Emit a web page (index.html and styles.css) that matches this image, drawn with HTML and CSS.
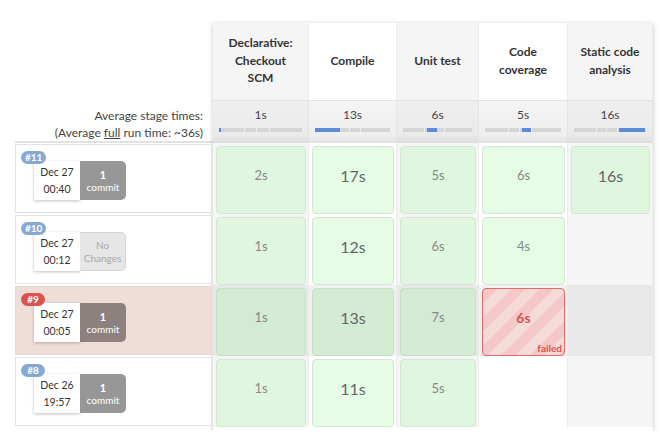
FILE: index.html
```html
<!DOCTYPE html>
<html>
<head>
<meta charset="utf-8">
<link rel="stylesheet" href="styles.css">
</head>
<body>
<div class="wrap">
  <div class="left">
    <div class="spacer"></div>
    <div class="avg-label">
      <div>Average stage times:</div>
      <div>(Average <u>full</u> run time: ~36s)</div>
    </div>
    <div class="run">
      <div class="run-box">
        <span class="badge">#11</span>
        <div class="date"><span>Dec 27</span><span>00:40</span></div>
        <div class="commit"><b>1</b><span>commit</span></div>
      </div>
    </div>
    <div class="run">
      <div class="run-box">
        <span class="badge">#10</span>
        <div class="date"><span>Dec 27</span><span>00:12</span></div>
        <div class="commit none"><span>No</span><span>Changes</span></div>
      </div>
    </div>
    <div class="run">
      <div class="run-box failed">
        <span class="badge red">#9</span>
        <div class="date"><span>Dec 27</span><span>00:05</span></div>
        <div class="commit dark"><b>1</b><span>commit</span></div>
      </div>
    </div>
    <div class="run">
      <div class="run-box">
        <span class="badge">#8</span>
        <div class="date"><span>Dec 26</span><span>19:57</span></div>
        <div class="commit"><b>1</b><span>commit</span></div>
      </div>
    </div>
  </div>

  <div class="stages">
    <div class="head g">Declarative:<br>Checkout<br>SCM</div>
    <div class="head w">Compile</div>
    <div class="head g">Unit test</div>
    <div class="head w">Code<br>coverage</div>
    <div class="head g">Static code<br>analysis</div>

    <div class="avg g"><span>1s</span><div class="track"><i class="fill" style="left:0;width:2px"></i></div></div>
    <div class="avg w"><span>13s</span><div class="track"><i class="fill" style="left:0;width:25px"></i></div></div>
    <div class="avg g"><span>6s</span><div class="track"><i class="fill" style="left:24px;width:10px"></i></div></div>
    <div class="avg w"><span>5s</span><div class="track"><i class="fill" style="left:37px;width:9px"></i></div></div>
    <div class="avg g"><span>16s</span><div class="track"><i class="fill" style="left:45px;width:26px"></i></div></div>

    <div class="slot g"><div class="cell">2s</div></div>
    <div class="slot w"><div class="cell lt big">17s</div></div>
    <div class="slot g"><div class="cell">5s</div></div>
    <div class="slot w"><div class="cell lt">6s</div></div>
    <div class="slot g"><div class="cell big">16s</div></div>

    <div class="slot g"><div class="cell">1s</div></div>
    <div class="slot w"><div class="cell lt big">12s</div></div>
    <div class="slot g"><div class="cell">6s</div></div>
    <div class="slot w"><div class="cell lt">4s</div></div>
    <div class="slot g"></div>

    <div class="slot g f"><div class="cell dk">1s</div></div>
    <div class="slot w f"><div class="cell dk big">13s</div></div>
    <div class="slot g f"><div class="cell dk">7s</div></div>
    <div class="slot w f"><div class="cell fail"><b>6s</b><span class="flabel">failed</span></div></div>
    <div class="slot g f"></div>

    <div class="slot g last"><div class="cell">1s</div></div>
    <div class="slot w last"><div class="cell lt big">11s</div></div>
    <div class="slot g last"><div class="cell">5s</div></div>
    <div class="slot w last"></div>
    <div class="slot g last"></div>
  </div>
</div>
</body>
</html>
```

FILE: styles.css
```css
* { box-sizing: border-box; }
body {
  margin: 0;
  background: #fff;
  font-family: "Lato", "Open Sans", sans-serif;
  color: #333;
}
.wrap {
  display: flex;
  padding: 23px 0 0 15px;
}
.left {
  width: 198px;
  display: flex;
  flex-direction: column;
}
.spacer { height: 77px; }
.avg-label {
  height: 43px;
  border-bottom: 2px solid #e2e2e2;
  text-align: right;
  padding: 7px 10px 0 0;
  font-size: 12px;
  line-height: 17px;
  color: #444;
}
.run {
  height: 71px;
  padding-top: 1px;
  padding-right: 1px;
}
.run-box {
  position: relative;
  height: 69px;
  border: 1px solid #e2e2e2;
  background: #fff;
  display: flex;
  align-items: flex-start;
  padding: 16px 0 0 18px;
}
.run-box.failed { background: #efddd8; border-color: #e8d6d2; }
.badge {
  position: absolute;
  left: 5px;
  top: 6px;
  z-index: 2;
  background: #86a9d3;
  color: #fff;
  font-size: 10px;
  font-weight: bold;
  line-height: 13px;
  padding: 0 4px;
  border-radius: 7px;
  min-width: 24px;
  text-align: center;
}
.badge.red { background: #d9534f; }
.date {
  width: 46px;
  height: 39px;
  background: #fff;
  box-shadow: 0 1px 3px rgba(0,0,0,0.25);
  display: flex;
  flex-direction: column;
  justify-content: space-around;
  align-items: center;
  font-size: 10.5px;
  color: #333;
  padding: 2px 0;
}
.commit {
  width: 46px;
  height: 39px;
  background: #979797;
  color: #fff;
  border-radius: 0 5px 5px 0;
  display: flex;
  flex-direction: column;
  justify-content: center;
  align-items: center;
  font-size: 10px;
  line-height: 13px;
}
.commit b { font-size: 11px; }
.commit.dark { background: #8c817e; }
.commit.none {
  background: #e6e6e6;
  color: #a8a8a8;
  border: 1px solid #d6d6d6;
  border-left: none;
}

.stages {
  display: grid;
  grid-template-columns: 96px 88px 82px 89px 85px;
  grid-template-rows: 77px 43px repeat(4, 71px);
  box-shadow: 0 1px 5px rgba(0,0,0,0.22);
  height: 408px;
  align-self: flex-start;
}
.g { background: #f5f5f5; }
.w { background: #fff; }
.head {
  display: flex;
  align-items: center;
  justify-content: center;
  text-align: center;
  font-weight: bold;
  font-size: 12px;
  line-height: 17.5px;
  color: #333;
  border-right: 1px solid #ececec;
  padding-bottom: 2px;
}
.avg {
  position: relative;
  text-align: center;
  font-size: 12px;
  color: #444;
  padding-top: 6px;
  border-right: 1px solid #e4e4e4;
  background: linear-gradient(#efefef, #eaeaea 80%, #dedede);
  border-top: 1px solid #e2e2e2;
}
.avg.w { background: linear-gradient(#f4f4f4, #efefef 80%, #e2e2e2); }
.track {
  position: absolute;
  left: 6px;
  right: 6px;
  top: 27px;
  height: 4px;
  background:
    linear-gradient(90deg, transparent 30%, #eeeeee 30%, #eeeeee calc(30% + 1px), transparent calc(30% + 1px)),
    linear-gradient(90deg, transparent 45%, #eeeeee 45%, #eeeeee calc(45% + 1px), transparent calc(45% + 1px)),
    linear-gradient(90deg, transparent 60%, #eeeeee 60%, #eeeeee calc(60% + 1px), transparent calc(60% + 1px)),
    #d5d5d5;
}
.fill {
  position: absolute;
  top: 0;
  height: 4px;
  background: #5a8dd6;
}
.slot {
  padding: 3px 2px 0 3px;
  border-right: 1px solid #ececec;
}
.slot.f.g { background: #e8e8e8; }
.slot.f.w { background: #f0f0f0; }
.cell {
  height: 68px;
  background: #dff7de;
  border: 1px solid #d6e4d5;
  border-radius: 4px;
  display: flex;
  align-items: center;
  justify-content: center;
  font-size: 13px;
  color: #888;
  padding-bottom: 10px;
}
.cell.lt { background: #e5fde4; }
.cell.dk { background: #d3ebd3; border-color: #cadfca; }
.cell.big { font-size: 16px; color: #666; }
.cell.fail {
  position: relative;
  border: 1px solid #e06a6a;
  background: repeating-linear-gradient(135deg, #f5c8c8 0 10px, #f5dbd7 10px 20px);
  color: #d9534f;
  font-size: 14px;
}
.flabel {
  position: absolute;
  right: 2px;
  bottom: 1px;
  font-size: 10px;
  font-weight: bold;
  color: #d9534f;
}
```
